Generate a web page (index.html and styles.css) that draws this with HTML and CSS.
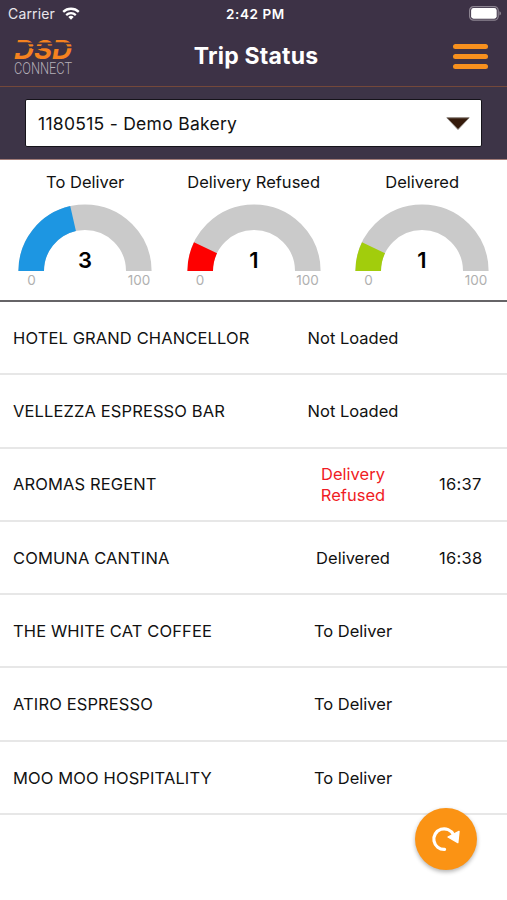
FILE: index.html
```
<!DOCTYPE html>
<html lang="en">
<head>
    <meta charset="UTF-8">
    <meta name="viewport" content="width=device-width, initial-scale=1.0">
    <title>Trip Status</title>
    <link rel="stylesheet" href="styles.css">
</head>
<body>
    <header class="header">
        <div class="status-bar">
            <div class="carrier">
                <span>Carrier</span>
                <svg class="wifi" viewBox="0 0 18 13" width="18" height="13">
                    <path d="M1.2 4.9a11.2 11.2 0 0 1 15.6 0" fill="none" stroke="#fff" stroke-width="2.3"/>
                    <path d="M4.2 8.1a7 7 0 0 1 9.6 0" fill="none" stroke="#fff" stroke-width="2.2"/>
                    <path d="M9 12.8 6.3 10a3.9 3.9 0 0 1 5.4 0z" fill="#fff"/>
                </svg>
            </div>
            <span class="clock">2:42 PM</span>
            <svg class="battery" viewBox="0 0 32 15" width="32" height="15">
                <rect x="0.6" y="0.6" width="28.6" height="13.6" rx="4" fill="none" stroke="#8d8592" stroke-width="1.2"/>
                <rect x="2.1" y="2.1" width="25.6" height="10.6" rx="2.4" fill="#fff"/>
                <path d="M30.4 5.2v4.4q1.6-.6 1.6-2.2t-1.6-2.2z" fill="#8d8592"/>
            </svg>
        </div>
        <div class="nav">
            <svg class="logo" viewBox="0 0 62 46" width="62" height="46">
                <text class="logo-top" x="0" y="25" textLength="58" lengthAdjust="spacingAndGlyphs">DSD</text>
                <path d="M0 9.4h62M0 13.4h62" stroke="#3d3246" stroke-width="1.8"/>
                <path d="M0 8.5h14l-4 10.5H0zM19 12h9l-1 3h-9zM40 8.5h10l-2 6.5h-9z" fill="#3d3246"/>
                <text class="logo-bottom" x="0" y="40" textLength="58" lengthAdjust="spacingAndGlyphs">CONNECT</text>
            </svg>
            <h1>Trip Status</h1>
            <div class="menu">
                <span></span>
                <span></span>
                <span></span>
            </div>
        </div>
    </header>

    <div class="trip">
        <div class="select">
            <span>1180515 - Demo Bakery</span>
            <svg viewBox="0 0 24 13" width="24" height="13">
                <path d="M.8.8h22.4L12 12.4z" fill="#351a0b" stroke="#837a72" stroke-width="1"/>
            </svg>
        </div>
    </div>

    <section class="gauges">
        <div class="gauge">
            <h2>To Deliver</h2>
            <svg viewBox="0 0 134 67" width="134" height="67">
                <path class="track" d="M13.2 67a53.8 53.8 0 0 1 107.6 0"/>
                <path class="fill blue" pathLength="7" stroke-dasharray="3 7" d="M13.2 67a53.8 53.8 0 0 1 107.6 0"/>
                <text x="67" y="64">3</text>
            </svg>
            <div class="scale"><span>0</span><span>100</span></div>
        </div>
        <div class="gauge">
            <h2>Delivery Refused</h2>
            <svg viewBox="0 0 134 67" width="134" height="67">
                <path class="track" d="M13.2 67a53.8 53.8 0 0 1 107.6 0"/>
                <path class="fill red" pathLength="7" stroke-dasharray="1 7" d="M13.2 67a53.8 53.8 0 0 1 107.6 0"/>
                <text x="67" y="64">1</text>
            </svg>
            <div class="scale"><span>0</span><span>100</span></div>
        </div>
        <div class="gauge">
            <h2>Delivered</h2>
            <svg viewBox="0 0 134 67" width="134" height="67">
                <path class="track" d="M13.2 67a53.8 53.8 0 0 1 107.6 0"/>
                <path class="fill green" pathLength="7" stroke-dasharray="1 7" d="M13.2 67a53.8 53.8 0 0 1 107.6 0"/>
                <text x="67" y="64">1</text>
            </svg>
            <div class="scale"><span>0</span><span>100</span></div>
        </div>
    </section>

    <ul class="stops">
        <li><span class="name">HOTEL GRAND CHANCELLOR</span><span class="state">Not Loaded</span><span class="time"></span></li>
        <li><span class="name">VELLEZZA ESPRESSO BAR</span><span class="state">Not Loaded</span><span class="time"></span></li>
        <li><span class="name">AROMAS REGENT</span><span class="state refused">Delivery Refused</span><span class="time">16:37</span></li>
        <li><span class="name">COMUNA CANTINA</span><span class="state">Delivered</span><span class="time">16:38</span></li>
        <li><span class="name">THE WHITE CAT COFFEE</span><span class="state">To Deliver</span><span class="time"></span></li>
        <li><span class="name">ATIRO ESPRESSO</span><span class="state">To Deliver</span><span class="time"></span></li>
        <li><span class="name">MOO MOO HOSPITALITY</span><span class="state">To Deliver</span><span class="time"></span></li>
    </ul>

    <button class="refresh" aria-label="Refresh">
        <svg viewBox="0 0 28 26" width="28" height="26">
            <path d="M12.6 23.4A10.3 10.3 0 1 1 21.4 8.6" fill="none" stroke="#fff" stroke-width="3.2" stroke-linecap="round"/>
            <path d="M27 5.4 25.8 16.6 16 11z" fill="#fff" stroke="#fff" stroke-width="1.4" stroke-linejoin="round"/>
        </svg>
    </button>
</body>
</html>
```
FILE: styles.css
```
* {
    box-sizing: border-box;
}

body {
    margin: 0;
    height: 900px;
    overflow: hidden;
    background: #fff;
    color: #111;
    font-family: Inter, "Liberation Sans", sans-serif;
    font-size: 16.5px;
}

svg {
    overflow: visible;
}

.header {
    height: 87px;
    background: #3d3246;
    border-bottom: 1px solid #74483a;
    color: #fff;
}

.status-bar {
    display: grid;
    grid-template-columns: 1fr auto 1fr;
    align-items: center;
    height: 27px;
    padding: 0 4px 0 8px;
    font-size: 14px;
}

.carrier {
    display: flex;
    align-items: center;
    gap: 7px;
    color: #e9e6ec;
    letter-spacing: 0.15px;
}

.clock {
    font-weight: 600;
    font-size: 13.5px;
    letter-spacing: 0.6px;
}

.battery {
    justify-self: end;
    margin-right: 2px;
}

.nav {
    display: grid;
    grid-template-columns: 80px 1fr 70px;
    align-items: center;
    height: 59px;
    padding: 0 19px 0 14px;
}

.logo-top {
    font-family: Inter, sans-serif;
    font-size: 26px;
    font-weight: 700;
    font-style: italic;
    fill: #f58220;
}

.logo-bottom {
    font-family: Roboto, sans-serif;
    font-size: 16px;
    font-weight: 300;
    fill: #b5afb8;
}

h1 {
    margin: 0 0 2px;
    text-align: center;
    font-size: 23px;
    font-weight: 700;
    letter-spacing: 0.2px;
}

.menu {
    display: flex;
    flex-direction: column;
    justify-self: end;
    gap: 4.5px;
    width: 35px;
}

.menu span {
    height: 5.5px;
    border-radius: 3px;
    background: #f7901e;
}

.trip {
    height: 73px;
    padding: 12px 25px;
    background: #3d3447;
    border-bottom: 1px solid #a27c78;
}

.select {
    display: flex;
    align-items: center;
    justify-content: space-between;
    height: 48px;
    padding: 0 11px 0 12px;
    background: #fff;
    border: 1px solid #15131a;
    border-radius: 2px;
    font-size: 17.5px;
    letter-spacing: 0.28px;
}

.gauges {
    display: grid;
    grid-template-columns: repeat(3, 168.5px);
    justify-content: center;
    height: 142px;
    padding-top: 12px;
    padding-left: 0.4px;
    border-bottom: 2px solid #666467;
}

.gauge {
    display: flex;
    flex-direction: column;
    align-items: center;
}

.gauge h2 {
    margin: 0 0 12px;
    font-size: 16.5px;
    line-height: 20px;
    font-weight: 400;
}

.gauge path {
    fill: none;
    stroke-width: 25.6;
}

.gauge .track {
    stroke: #cacaca;
}

.gauge .blue {
    stroke: #1d96e2;
}

.gauge .red {
    stroke: #fe0000;
}

.gauge .green {
    stroke: #a2cd0c;
}

.gauge text {
    font-size: 22px;
    font-weight: 600;
    text-anchor: middle;
    fill: #000;
}

.scale {
    display: flex;
    justify-content: space-between;
    width: 134px;
    padding: 0 2px 0 9px;
    font-size: 13.5px;
    line-height: 18px;
    color: #b0b0b0;
}

.stops {
    margin: 0;
    padding: 0;
    list-style: none;
}

.stops li {
    display: grid;
    grid-template-columns: 280px 120px 1fr;
    align-items: center;
    height: 73.3px;
    padding: 1px 0 0 13px;
    border-bottom: 2px solid #e7e7e7;
    line-height: 20.5px;
}

.name {
    letter-spacing: 0.12px;
}

.state {
    text-align: center;
}

.state.refused {
    padding: 0 20px;
    color: #f01c24;
}

.time {
    padding-left: 26px;
    letter-spacing: 0.25px;
}

.refresh {
    position: absolute;
    left: 415px;
    top: 808px;
    display: flex;
    align-items: center;
    justify-content: center;
    width: 62px;
    height: 62px;
    padding: 0;
    border: none;
    border-radius: 50%;
    background: #fb9314;
    box-shadow: 0 2px 4px rgba(0, 0, 0, 0.3);
}
```
